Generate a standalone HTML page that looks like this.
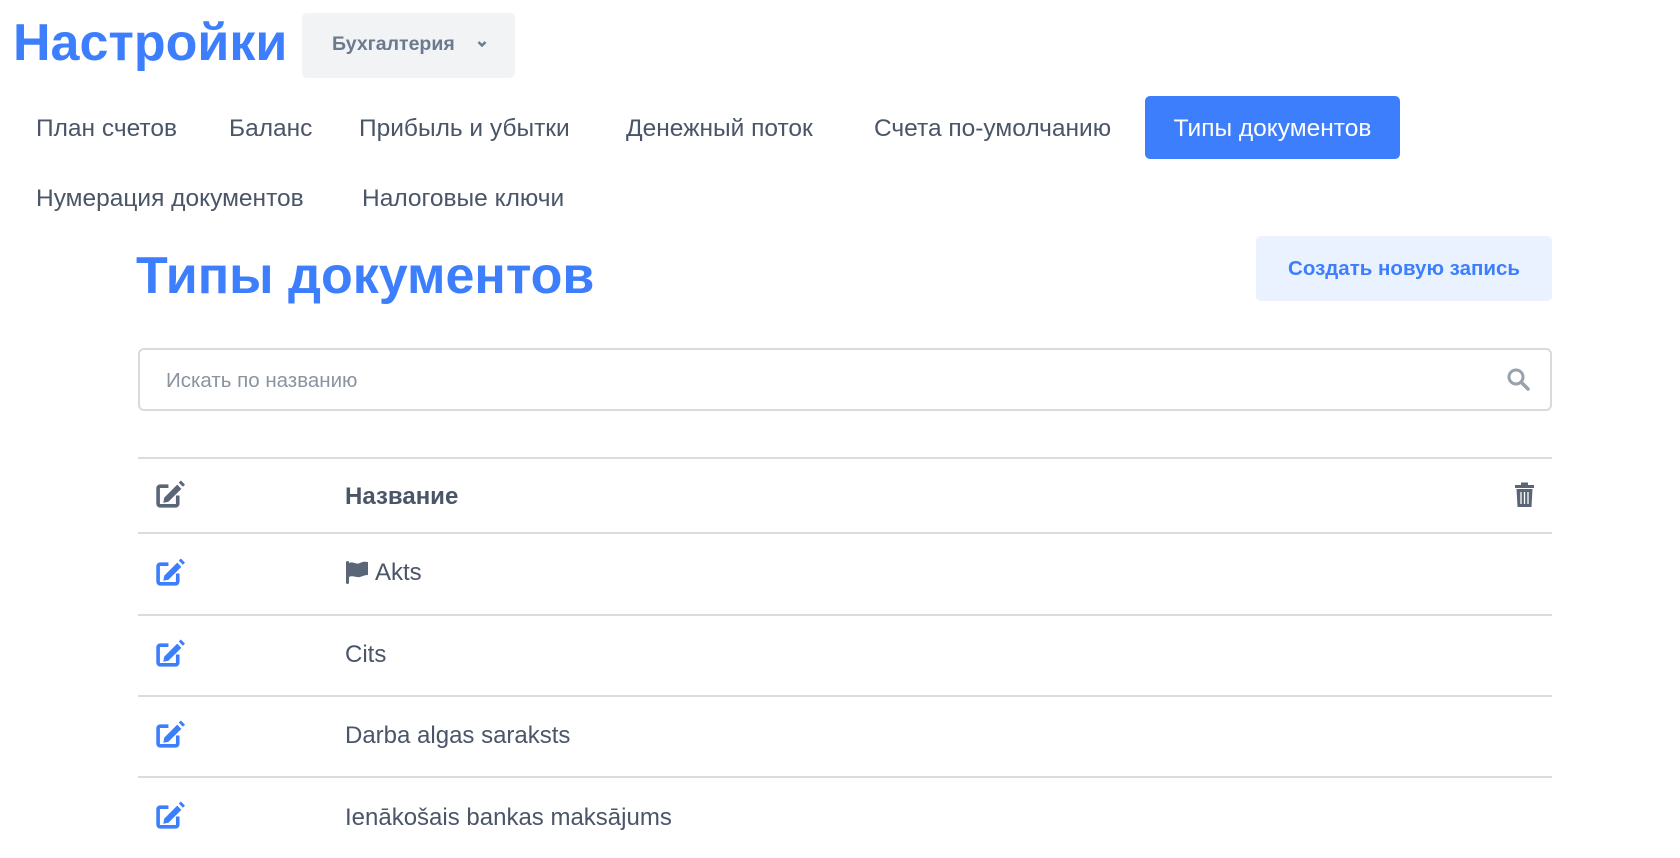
<!DOCTYPE html>
<html><head><meta charset="utf-8"><style>
body{margin:0;width:1680px;height:858px;background:#fff;font-family:"Liberation Sans","DejaVu Sans",sans-serif;color:#4a5568;position:relative;overflow:hidden}
.a{position:absolute;white-space:nowrap}
.tab{font-size:24.5px;color:#4a5568;line-height:30px;top:114px}
.tab2{font-size:24.5px;color:#4a5568;line-height:30px;top:184px}
.line{position:absolute;left:138px;width:1414px;height:2px;background:#dcdcdc}
.row{font-size:24px;color:#4a5568;line-height:30px;left:345px}
.ed{position:absolute;left:155px;width:31px;height:31px}
</style></head><body>
<div class="a" style="left:13px;top:8px;font-size:52px;font-weight:bold;color:#3d7efc;line-height:70px">Настройки</div>
<div class="a" style="left:302px;top:13px;width:213px;height:65px;background:#f1f3f5;border-radius:5px"></div>
<div class="a" style="left:332px;top:31px;font-size:19.5px;font-weight:bold;color:#6b7a8f;line-height:26px">Бухгалтерия</div>
<svg class="a" style="left:476px;top:38px" width="12" height="12" viewBox="0 0 12 12"><path d="M2.5 4l3.5 3.5L9.5 4" fill="none" stroke="#6b7a8f" stroke-width="2.4"/></svg>

<div class="a tab" style="left:36px">План счетов</div>
<div class="a tab" style="left:229px">Баланс</div>
<div class="a tab" style="left:359px">Прибыль и убытки</div>
<div class="a tab" style="left:626px">Денежный поток</div>
<div class="a tab" style="left:874px">Счета по-умолчанию</div>
<div class="a" style="left:1145px;top:96px;width:255px;height:63px;background:#3d7efc;border-radius:5px"></div>
<div class="a tab" style="left:1145px;width:255px;text-align:center;color:#fff">Типы документов</div>
<div class="a tab2" style="left:36px">Нумерация документов</div>
<div class="a tab2" style="left:362px">Налоговые ключи</div>

<div class="a" style="left:136px;top:243px;font-size:52px;font-weight:bold;color:#3d7efc;line-height:66px">Типы документов</div>
<div class="a" style="left:1256px;top:236px;width:296px;height:65px;background:#eaf2ff;border-radius:5px"></div>
<div class="a" style="left:1256px;top:256px;width:296px;text-align:center;font-size:20.5px;font-weight:bold;color:#3d7efc;line-height:26px">Создать новую запись</div>

<div class="a" style="left:138px;top:348px;width:1410px;height:59px;border:2px solid #dadada;border-radius:6px"></div>
<div class="a" style="left:166px;top:368px;font-size:20.5px;color:#8a94a0;line-height:26px">Искать по названию</div>
<svg class="a" style="left:1506px;top:367px" width="25" height="25" viewBox="0 0 25 25"><circle cx="10" cy="10" r="7" fill="none" stroke="#98a2ad" stroke-width="3"/><path d="M15 15l7 7" stroke="#98a2ad" stroke-width="3.5" stroke-linecap="round"/></svg>

<div class="line" style="top:457px"></div>
<div class="line" style="top:532px"></div>
<div class="line" style="top:614px"></div>
<div class="line" style="top:695px"></div>
<div class="line" style="top:776px"></div>

<svg class="ed" style="top:479px" viewBox="0 0 30 30"><path d="M13 7H5a2 2 0 0 0-2 2v15a2 2 0 0 0 2 2h15a2 2 0 0 0 2-2v-8" fill="none" stroke="#5a6677" stroke-width="3.5"/><path d="M9 18l12.5-12.5 4 4L13 22l-5 1z" fill="#5a6677"/><path d="M23 3.5l2-2 4 4-2 2z" fill="#5a6677"/></svg>
<div class="a row" style="top:482px;font-weight:bold">Название</div>
<svg class="a" style="left:1514px;top:482px" width="21" height="26" viewBox="0 0 21 26"><rect x="1" y="3" width="19" height="3" fill="#5a6677"/><rect x="7" y="0.5" width="7" height="3" fill="#5a6677"/><path d="M2.5 7h16l-1 18h-14z" fill="#5a6677"/><path d="M7 10v12M10.5 10v12M14 10v12" stroke="#fff" stroke-width="1.3"/></svg>

<svg class="ed" style="top:557px" viewBox="0 0 30 30"><path d="M13 7H5a2 2 0 0 0-2 2v15a2 2 0 0 0 2 2h15a2 2 0 0 0 2-2v-8" fill="none" stroke="#3d7efc" stroke-width="3.5"/><path d="M9 18l12.5-12.5 4 4L13 22l-5 1z" fill="#3d7efc"/><path d="M23 3.5l2-2 4 4-2 2z" fill="#3d7efc"/></svg>
<svg class="a" style="left:345px;top:559px" width="24" height="26" viewBox="0 0 24 26"><rect x="1" y="2" width="3" height="23" rx="1.5" fill="#5a6677"/><path d="M4 4c4-2 7 2 11 0s6-1 8-1v13c-3 0-5 1-8 2s-7-2-11 0z" fill="#5a6677"/></svg>
<div class="a row" style="top:558px;left:375px">Akts</div>

<svg class="ed" style="top:638px" viewBox="0 0 30 30"><path d="M13 7H5a2 2 0 0 0-2 2v15a2 2 0 0 0 2 2h15a2 2 0 0 0 2-2v-8" fill="none" stroke="#3d7efc" stroke-width="3.5"/><path d="M9 18l12.5-12.5 4 4L13 22l-5 1z" fill="#3d7efc"/><path d="M23 3.5l2-2 4 4-2 2z" fill="#3d7efc"/></svg>
<div class="a row" style="top:640px">Cits</div>

<svg class="ed" style="top:719px" viewBox="0 0 30 30"><path d="M13 7H5a2 2 0 0 0-2 2v15a2 2 0 0 0 2 2h15a2 2 0 0 0 2-2v-8" fill="none" stroke="#3d7efc" stroke-width="3.5"/><path d="M9 18l12.5-12.5 4 4L13 22l-5 1z" fill="#3d7efc"/><path d="M23 3.5l2-2 4 4-2 2z" fill="#3d7efc"/></svg>
<div class="a row" style="top:721px">Darba algas saraksts</div>

<svg class="ed" style="top:800px" viewBox="0 0 30 30"><path d="M13 7H5a2 2 0 0 0-2 2v15a2 2 0 0 0 2 2h15a2 2 0 0 0 2-2v-8" fill="none" stroke="#3d7efc" stroke-width="3.5"/><path d="M9 18l12.5-12.5 4 4L13 22l-5 1z" fill="#3d7efc"/><path d="M23 3.5l2-2 4 4-2 2z" fill="#3d7efc"/></svg>
<div class="a row" style="top:803px">Ienākošais bankas maksājums</div>
</body></html>
